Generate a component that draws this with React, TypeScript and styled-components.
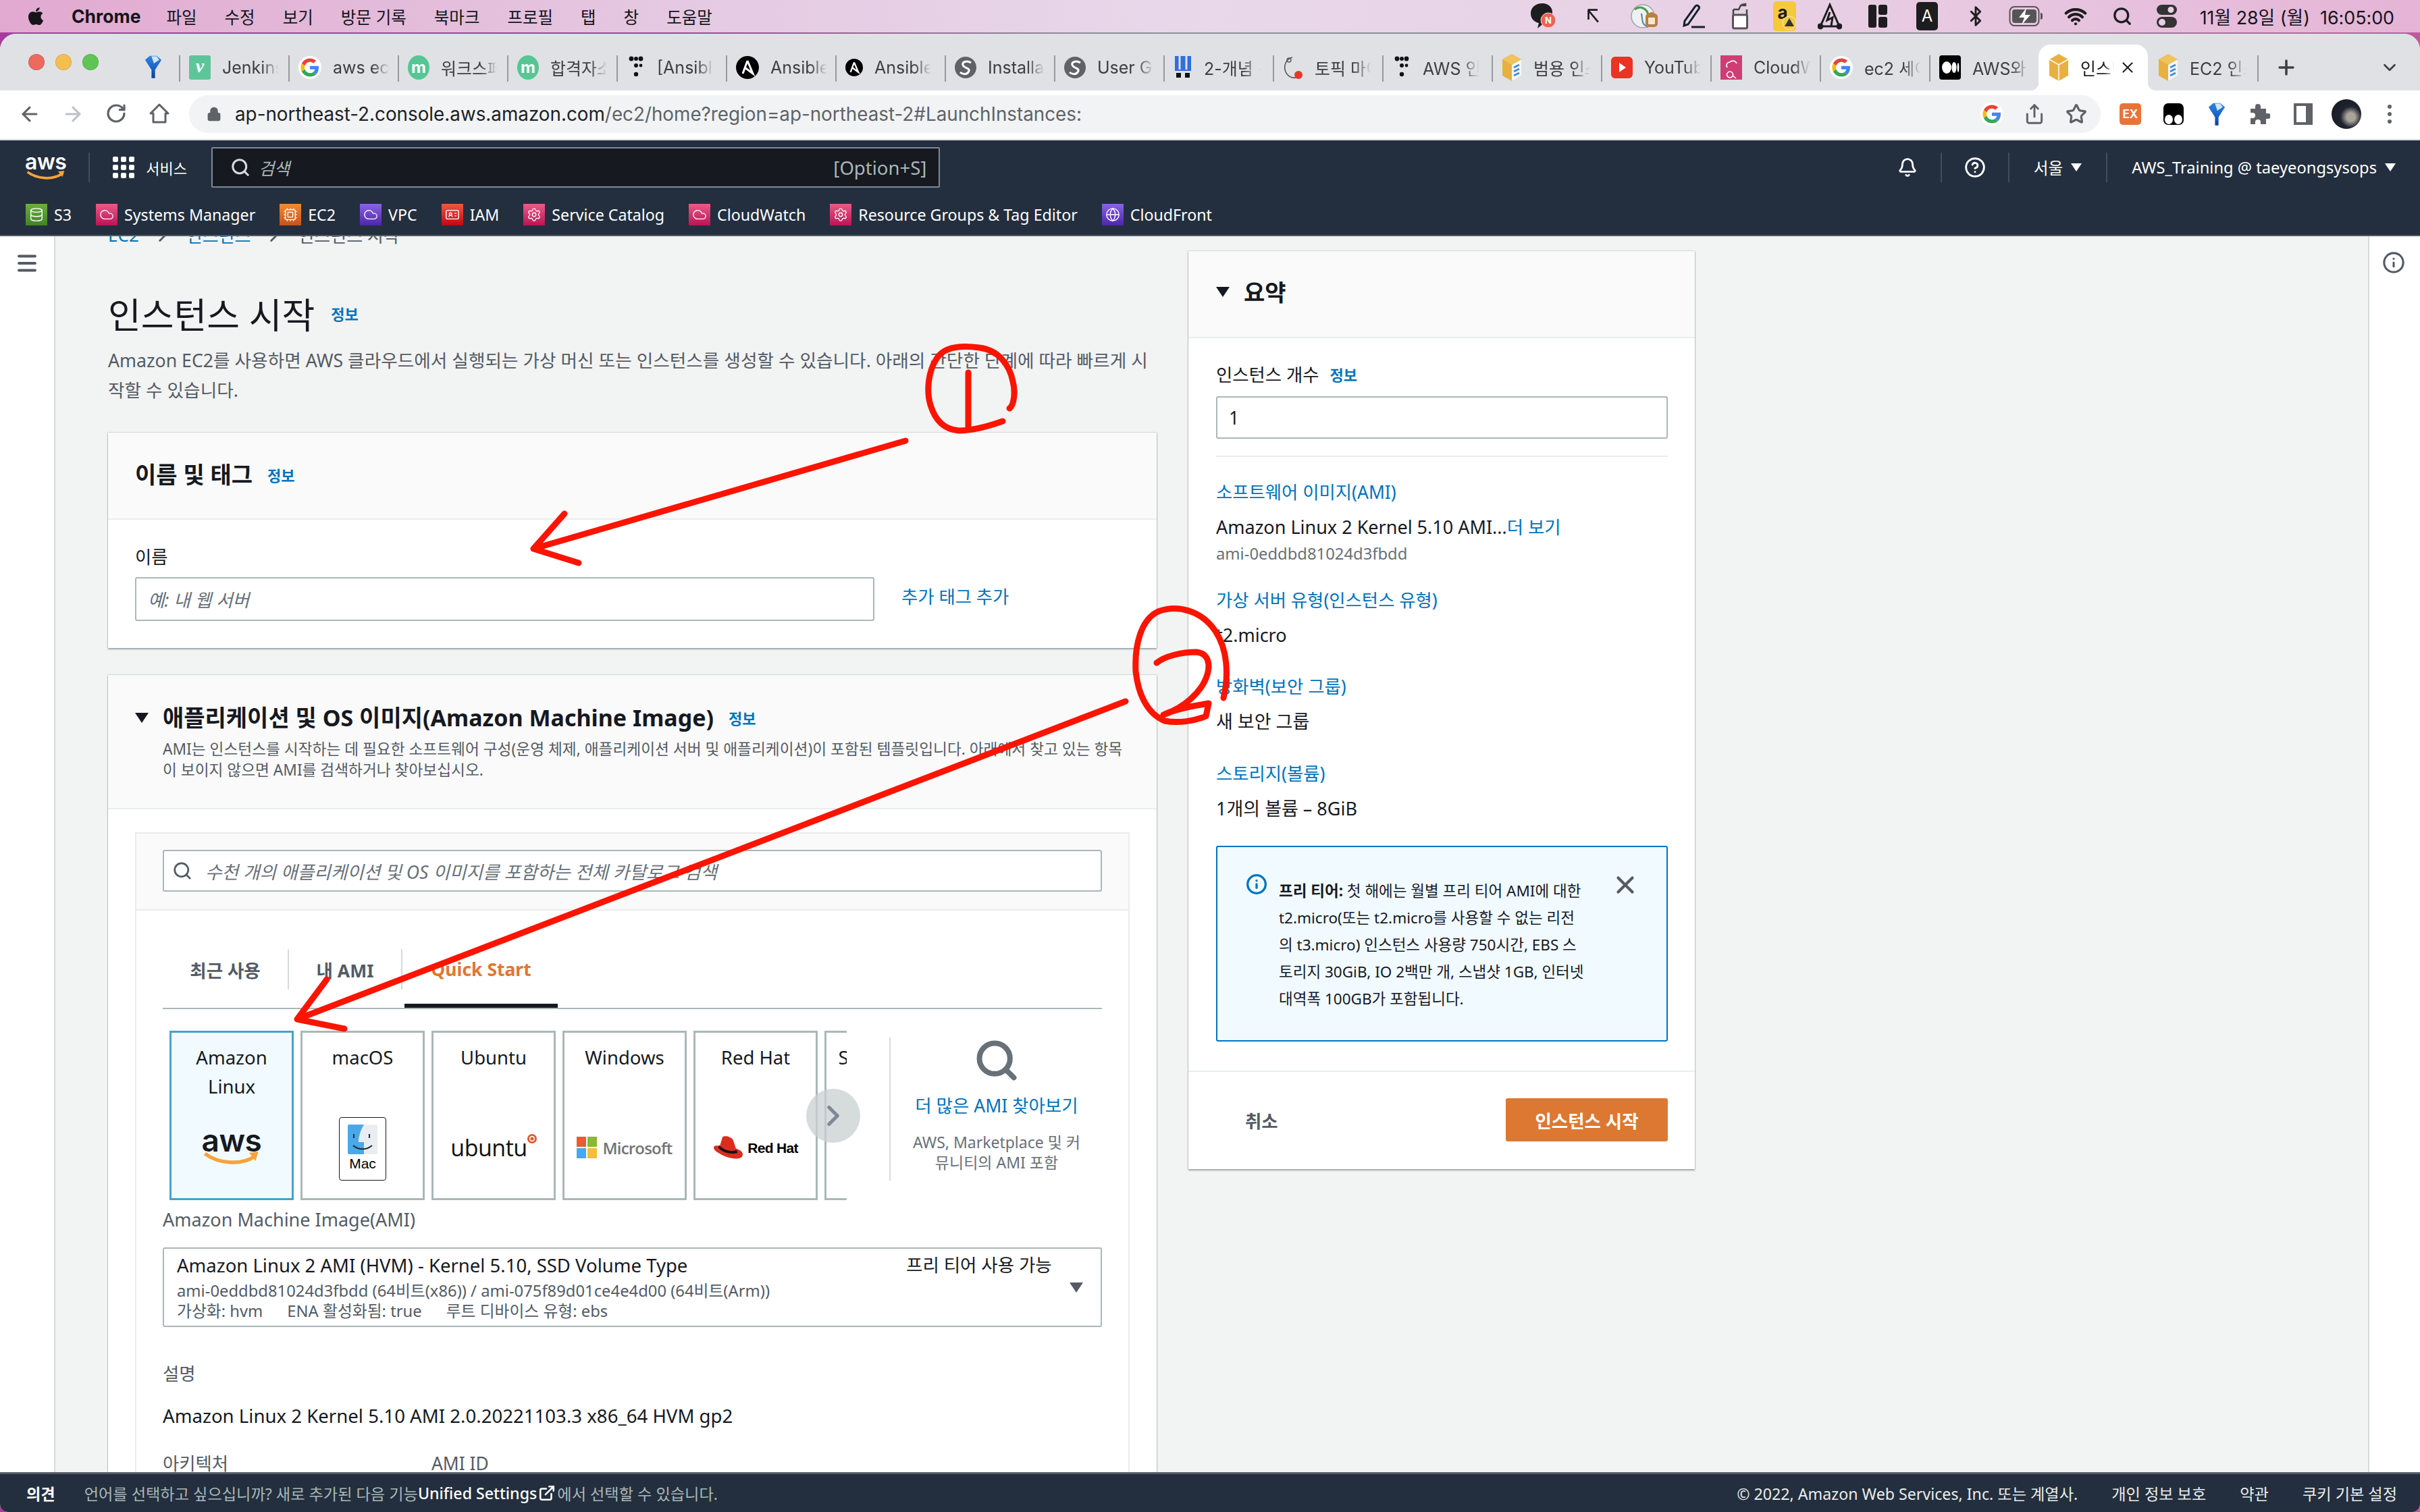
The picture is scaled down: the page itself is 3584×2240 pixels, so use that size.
import * as React from "react";
import styled, { createGlobalStyle } from "styled-components";
import {
  ArrowLeft,
  ArrowRight,
  Bell,
  Bluetooth,
  ChevronDown,
  ChevronRight,
  CircleHelp,
  Cloud,
  Cpu,
  Database,
  ExternalLink,
  Globe,
  IdCard,
  Info,
  Lock,
  Menu,
  Plus,
  RotateCw,
  Search,
  Settings,
  Share,
  Star,
  Wifi,
  X,
} from "lucide-react";
import { FaApple } from "react-icons/fa";

const UI_FONT = `Inter, "Noto Sans CJK KR", sans-serif`;
const AWS_FONT = `"Noto Sans", "Noto Sans CJK KR", sans-serif`;

const GlobalStyle = createGlobalStyle`
  html, body { margin: 0; padding: 0; background: #232f3e; }
  * { box-sizing: border-box; }
  #root { width: 3584px; height: 2240px; }
`;

const Screen = styled.div`
  position: relative;
  width: 3584px;
  height: 2240px;
  display: flex;
  flex-direction: column;
  overflow: hidden;
  font-family: ${AWS_FONT};
`;

const MenuBar = styled.div`
  height: 48px;
  flex-shrink: 0;
  display: flex;
  align-items: center;
  padding: 0 38px;
  color: #14141a;
  font-family: ${UI_FONT};
  font-size: 24.5px;
  background: linear-gradient(90deg, #e2a9d0 0%, #e5cbe3 30%, #e8d8ea 50%, #e8cfe4 75%, #e5b4d6 100%);
`;

const AppName = styled.span`
  font-weight: 700;
  font-size: 26.5px;
  margin: 0 38px 0 38px;
`;

const MenuItem = styled.span`
  margin-right: 41px;
`;

const StatusArea = styled.div`
  margin-left: auto;
  display: flex;
  align-items: center;
`;

const StatusCell = styled.div<{ $w: number }>`
  width: ${(p) => p.$w}px;
  height: 48px;
  display: flex;
  align-items: center;
  justify-content: center;
`;

const Clock = styled.span`
  margin-left: 16px;
  font-size: 26.8px;
  white-space: pre;
`;

const Desktop = styled.div`
  flex: 1;
  min-height: 0;
  display: flex;
  padding-top: 2px;
  background: linear-gradient(90deg, #a63b9c 0%, #a0468f 28%, #8f8d98 45%, #8f8d98 80%, #c05a9c 100%);
`;

const Window = styled.div`
  flex: 1;
  min-width: 0;
  display: flex;
  flex-direction: column;
  border-radius: 24px 24px 12px 12px;
  overflow: hidden;
  background: #f2f3f3;
`;

const TabStrip = styled.div`
  height: 84px;
  flex-shrink: 0;
  display: flex;
  background: #dfe1e5;
  font-family: ${UI_FONT};
`;

const Lights = styled.div`
  width: 265px;
  flex-shrink: 0;
  display: flex;
  align-items: center;
  gap: 16px;
  padding: 0 0 0 42px;
`;

const Light = styled.span<{ $c: string }>`
  width: 24px;
  height: 24px;
  border-radius: 50%;
  background: ${(p) => p.$c};
  border: 1px solid rgba(0, 0, 0, 0.1);
`;

const PinnedIcon = styled.span`
  display: flex;
  margin-left: 51px;
  margin-top: 14px;
`;

const Tab = styled.div<{ $active?: boolean; $noSep?: boolean }>`
  position: relative;
  width: 162px;
  flex-shrink: 0;
  display: flex;
  align-items: center;
  gap: 17px;
  padding: 16px 0 0 15px;
  color: #3c4043;
  font-size: 25px;

  &::before {
    content: "";
    display: ${(p) => (p.$noSep ? "none" : "block")};
    position: absolute;
    left: 0;
    top: 32px;
    width: 2px;
    height: 39px;
    background: #97999d;
  }

  ${(p) =>
    p.$active &&
    `
    margin-top: 16px;
    height: 68px;
    padding-top: 0;
    background: #fff;
    border-radius: 18px 18px 0 0;
    color: #202124;
    &::after {
      content: "";
      position: absolute;
      left: -12px;
      right: -12px;
      bottom: 0;
      height: 12px;
      z-index: 0;
      background:
        radial-gradient(circle at 0 0, #dfe1e5 12px, #fff 12.5px) left / 12px 12px no-repeat,
        radial-gradient(circle at 100% 0, #dfe1e5 12px, #fff 12.5px) right / 12px 12px no-repeat;
    }
  `}
`;

const TabTitle = styled.span<{ $w?: number }>`
  width: ${(p) => p.$w ?? 84}px;
  white-space: nowrap;
  overflow: hidden;
  mask-image: linear-gradient(90deg, #000 70%, transparent 100%);
`;

const TabClose = styled.span`
  display: flex;
  position: relative;
  z-index: 1;
  margin-left: -10px;
  color: #202124;
`;

const StripEnd = styled.div`
  flex: 1;
  position: relative;
  display: flex;
  align-items: center;
  padding: 16px 30px 0 26px;
  justify-content: space-between;
  color: #3c4043;

  &::before {
    content: "";
    position: absolute;
    left: 0;
    top: 32px;
    width: 2px;
    height: 39px;
    background: #97999d;
  }
`;

const Toolbar = styled.div`
  height: 74px;
  flex-shrink: 0;
  display: flex;
  align-items: center;
  padding: 0 0 2px 0;
  background: #fff;
  border-bottom: 2px solid #dadce0;
  font-family: ${UI_FONT};
`;

const NavButtons = styled.div`
  width: 280px;
  flex-shrink: 0;
  display: flex;
  padding-left: 12px;
`;

const ToolButton = styled.span<{ $dim?: boolean }>`
  width: 64px;
  display: flex;
  justify-content: center;
  color: ${(p) => (p.$dim ? "#bdc0c4" : "#5f6368")};
`;

const Omnibox = styled.div`
  width: 2831px;
  height: 56px;
  flex-shrink: 0;
  display: flex;
  align-items: center;
  border-radius: 28px;
  background: #f1f3f4;
  padding-left: 26px;
  color: #5f6368;
`;

const UrlText = styled.span`
  margin-left: 20px;
  font-size: 27.8px;
  white-space: nowrap;
  color: #5f6368;
`;

const UrlHost = styled.span`
  color: #202124;
`;

const OmniActions = styled.div`
  margin-left: auto;
  display: flex;
  align-items: center;
  gap: 30px;
  padding-right: 20px;
`;

const ExtensionArea = styled.div`
  flex: 1;
  display: flex;
  align-items: center;
  padding-left: 12px;
  color: #5f6368;
`;

const ExtCell = styled.span`
  width: 64px;
  display: flex;
  justify-content: center;
`;

const ExBadge = styled.span`
  width: 32px;
  height: 32px;
  border-radius: 5px;
  background: #e8743a;
  color: #fff;
  font-size: 17px;
  font-weight: 700;
  display: flex;
  align-items: center;
  justify-content: center;
`;

const Avatar = styled.span`
  width: 44px;
  height: 44px;
  border-radius: 50%;
  background: radial-gradient(circle at 65% 60%, #a9a49a 0 16%, #1f2430 40%, #14161c 100%);
`;

const AwsNav = styled.div`
  height: 142px;
  flex-shrink: 0;
  background: #232f3e;
  border-bottom: 2px solid #545b64;
  color: #fff;
`;

const NavTop = styled.div`
  height: 80px;
  display: flex;
  align-items: center;
  padding-left: 37px;
`;

const LogoGap = styled.span`
  width: 33px;
`;

const NavSep = styled.span`
  width: 2px;
  height: 44px;
  background: #414d5c;
`;

const ServicesButton = styled.div`
  display: flex;
  align-items: center;
  gap: 17px;
  width: 180px;
  padding-left: 34px;
  font-size: 22px;
`;

const GridIcon = styled.span`
  display: grid;
  grid-template-columns: repeat(3, 8px);
  grid-auto-rows: 8px;
  gap: 4px;

  i {
    border-radius: 2px;
    background: #fff;
  }
`;

const SearchBox = styled.div`
  width: 1079px;
  height: 60px;
  display: flex;
  align-items: center;
  padding: 0 18px 0 26px;
  background: #16191f;
  border: 2px solid #7d8998;
  border-radius: 2px;
`;

const SearchHint = styled.span`
  margin-left: 12px;
  font-size: 25px;
  font-style: italic;
  color: #aab7b8;
`;

const ShortCut = styled.span`
  margin-left: auto;
  font-size: 27.5px;
  color: #aab7b8;
`;

const NavRight = styled.div`
  margin-left: auto;
  display: flex;
  align-items: center;
  font-size: 23.7px;
  padding-right: 36px;
`;

const NavIcon = styled.span`
  width: 98px;
  display: flex;
  justify-content: center;
`;

const DownTriangle = styled.span<{ $color?: string; $w?: number }>`
  display: inline-block;
  margin-left: 12px;
  border-left: ${(p) => (p.$w ?? 16) / 2}px solid transparent;
  border-right: ${(p) => (p.$w ?? 16) / 2}px solid transparent;
  border-top: ${(p) => ((p.$w ?? 16) * 3) / 4}px solid ${(p) => p.$color ?? "#fff"};
`;

const RegionText = styled.span<{ $end?: boolean }>`
  display: flex;
  align-items: center;
  padding: 0 ${(p) => (p.$end ? 0 : 36)}px 0 36px;
  white-space: nowrap;
`;

const Favorites = styled.div`
  height: 60px;
  display: flex;
  align-items: center;
  padding-left: 38px;
  gap: 36px;
  font-size: 23.2px;
`;

const FavoriteItem = styled.span`
  display: flex;
  align-items: center;
  gap: 10px;
  white-space: nowrap;
`;

const ServiceTile = styled.span<{ $from: string; $to: string }>`
  width: 32px;
  height: 32px;
  display: flex;
  align-items: center;
  justify-content: center;
  color: #fff;
  background: linear-gradient(0deg, ${(p) => p.$from}, ${(p) => p.$to});
`;

const Main = styled.div`
  flex: 1;
  min-height: 0;
  display: flex;
  background: #f2f3f3;
`;

const Rail = styled.div<{ $side: "left" | "right" }>`
  width: ${(p) => (p.$side === "left" ? 82 : 77)}px;
  flex-shrink: 0;
  display: flex;
  justify-content: center;
  padding: 22px ${(p) => (p.$side === "left" ? 0 : 4)}px 0 0;
  background: #fff;
  color: #545b64;
  border-${(p) => (p.$side === "left" ? "right" : "left")}: 2px solid #d5dbdb;
`;

const Content = styled.div`
  flex: 1;
  min-width: 0;
  display: flex;
  align-items: flex-start;
  gap: 47px;
  padding-left: 78px;
  overflow: hidden;
`;

const FormColumn = styled.div`
  width: 1553px;
  flex-shrink: 0;
`;

const Crumbs = styled.div`
  height: 36px;
  margin-top: -20px;
  display: flex;
  align-items: center;
  gap: 18px;
  font-size: 26px;
  color: #545b64;

  a {
    color: #0073bb;
  }
`;

const TitleRow = styled.div`
  height: 70px;
  margin-top: 63px;
  display: flex;
  align-items: center;
  gap: 24px;
`;

const PageTitle = styled.h1`
  margin: 0;
  font-size: 53px;
  font-weight: 400;
  color: #16191f;
  white-space: nowrap;
`;

const InfoLink = styled.a`
  font-size: 22px;
  font-weight: 700;
  color: #0073bb;
  white-space: nowrap;
  align-self: center;
`;

const Intro = styled.p`
  margin: 13px 0 41px;
  font-size: 26.7px;
  line-height: 44px;
  color: #545b64;
  white-space: nowrap;
`;

const Panel = styled.section`
  background: #fff;
  box-shadow: 0 2px 2px rgba(0, 28, 36, 0.35), 1px 0 1px rgba(0, 28, 36, 0.1), -1px 0 1px rgba(0, 28, 36, 0.1), 0 -1px 1px rgba(0, 28, 36, 0.08);
  margin-bottom: 40px;
`;

const PanelHeader = styled.div<{ $h: number }>`
  height: ${(p) => p.$h}px;
  background: #fafafa;
  border-bottom: 2px solid #eaeded;
`;

const NameHeaderRow = styled.div`
  display: flex;
  align-items: center;
  gap: 22px;
  height: 123px;
  padding-left: 40px;
`;

const SectionTitle = styled.h2`
  margin: 0;
  font-size: 34px;
  line-height: 50px;
  font-weight: 700;
  color: #16191f;
  white-space: nowrap;
`;

const NameBody = styled.div`
  padding: 37px 40px 40px;
`;

const FieldLabel = styled.div`
  font-size: 26.4px;
  line-height: 36px;
  color: #16191f;
  margin-bottom: 12px;
`;

const NameRow = styled.div`
  display: flex;
  align-items: center;
  gap: 40px;
`;

const TextInput = styled.div<{ $w?: number; $h: number; $italic?: boolean }>`
  width: ${(p) => (p.$w ? `${p.$w}px` : "100%")};
  height: ${(p) => p.$h}px;
  display: flex;
  align-items: center;
  padding: 0 17px;
  background: #fff;
  border: 2px solid #aab7b8;
  border-radius: 3px;
  font-size: ${(p) => (p.$italic ? 26.7 : 26.4)}px;
  color: ${(p) => (p.$italic ? "#687078" : "#16191f")};
  font-style: ${(p) => (p.$italic ? "italic" : "normal")};
  white-space: nowrap;
`;

const LinkText = styled.a<{ $size?: number }>`
  font-size: ${(p) => p.$size ?? 26.4}px;
  color: #0073bb;
  white-space: nowrap;
`;

const AddTag = styled(LinkText)`
  margin-top: -10px;
`;

const AmiHeaderInner = styled.div`
  padding: 38px 40px 0;
`;

const AmiHeaderTitle = styled.div`
  display: flex;
  align-items: center;
  gap: 22px;
`;

const Caret = styled.span`
  width: 0;
  height: 0;
  margin-right: -1px;
  border-left: 10px solid transparent;
  border-right: 10px solid transparent;
  border-top: 15px solid #16191f;
`;

const AmiDesc = styled.p`
  margin: 6px 0 0 41px;
  font-size: 22.7px;
  line-height: 31px;
  color: #545b64;
  white-space: nowrap;
`;

const AmiBody = styled.div`
  padding: 34px 40px 0;
`;

const Catalog = styled.div`
  border: 2px solid #eaeded;
  border-bottom: 0;
  padding-bottom: 200px;
`;

const CatalogSearch = styled.div`
  padding: 24px 39px 26px;
  background: #fafafa;
  border-bottom: 2px solid #eaeded;
`;

const CatalogSearchIcon = styled(Search)`
  margin-left: -5px;
  flex-shrink: 0;
`;

const CatalogHint = styled.span`
  margin-left: 19px;
`;

const CatalogBody = styled.div`
  padding: 0 39px;
`;

const AmiTabs = styled.div`
  display: flex;
  height: 146px;
  padding-top: 57px;
  border-bottom: 2px solid #aab7b8;
`;

const AmiTab = styled.div<{ $w: number; $active?: boolean; $divider?: boolean }>`
  position: relative;
  width: ${(p) => p.$w}px;
  height: 60px;
  display: flex;
  align-items: center;
  justify-content: center;
  font-size: 26.5px;
  font-weight: 700;
  color: ${(p) => (p.$active ? "#dd7832" : "#545b64")};
  border-right: ${(p) => (p.$divider ? "2px solid #d5dbdb" : "0")};

  ${(p) =>
    p.$active &&
    `
    &::after {
      content: "";
      position: absolute;
      left: 3px;
      right: 3px;
      top: 81px;
      height: 6px;
      background: #16191f;
    }
  `}
`;

const CardsRow = styled.div`
  display: flex;
  margin-top: 32px;
  padding-left: 10px;
`;

const CardsViewport = styled.div`
  position: relative;
  width: 1066px;
  height: 251px;
  flex-shrink: 0;
`;

const CardsClip = styled.div`
  width: 1003px;
  height: 251px;
  overflow: hidden;
  display: flex;
  gap: 10px;
`;

const OsCard = styled.div<{ $active?: boolean }>`
  width: 184px;
  flex-shrink: 0;
  display: flex;
  flex-direction: column;
  align-items: center;
  padding: 15px 0;
  text-align: center;
  font-size: 27.5px;
  line-height: 43px;
  color: #16191f;
  white-space: nowrap;
  background: ${(p) => (p.$active ? "#f1faff" : "#fff")};
  border: 3px solid ${(p) => (p.$active ? "#44a3cb" : "#aab7b8")};
`;

const CardLogo = styled.div`
  margin-top: auto;
  height: 120px;
  display: flex;
  align-items: center;
  justify-content: center;
`;

const ScrollNext = styled.div`
  position: absolute;
  left: 943px;
  top: 86px;
  width: 80px;
  height: 80px;
  border-radius: 50%;
  display: flex;
  align-items: center;
  justify-content: center;
  color: #7d8998;
  background: rgba(200, 208, 208, 0.75);
`;

const MoreAmis = styled.div`
  width: 316px;
  flex-shrink: 0;
  margin-top: 10px;
  height: 212px;
  border-left: 2px solid #d5dbdb;
  display: flex;
  flex-direction: column;
  align-items: center;
  text-align: center;
  color: #687078;
  font-size: 23px;
  line-height: 30px;
`;

const MoreIcon = styled.div`
  display: flex;
  height: 86px;
  color: #687078;
`;

const MoreNote = styled.div`
  margin-top: 24px;
  white-space: nowrap;
`;

const AmiLabel = styled.div`
  margin-top: 11px;
  font-size: 27px;
  line-height: 36px;
  color: #545b64;
`;

const AmiSelect = styled.div`
  margin-top: 23px;
  height: 118px;
  padding: 8px 26px 0 19px;
  display: flex;
  justify-content: space-between;
  border: 2px solid #aab7b8;
  border-radius: 3px;
  white-space: nowrap;
`;

const AmiName = styled.div`
  font-size: 27.5px;
  line-height: 34px;
  color: #16191f;
  margin-bottom: 5px;
`;

const AmiMeta = styled.div`
  display: flex;
  gap: 36px;
  font-size: 23.8px;
  line-height: 30px;
  color: #545b64;
`;

const AmiTierColumn = styled.div`
  width: 262px;
  display: flex;
  flex-direction: column;
  align-items: flex-end;
  font-size: 26.5px;
  line-height: 32px;
  color: #16191f;
`;

const AmiTier = styled.span`
  align-self: flex-start;
`;

const SelectCaret = styled(DownTriangle)`
  margin: 10px 0 0;
`;

const DetailLabel = styled.div<{ $top: number }>`
  margin-top: ${(p) => p.$top}px;
  font-size: 26.4px;
  line-height: 36px;
  color: #545b64;
`;

const DetailValue = styled.div`
  margin-top: 26px;
  font-size: 27.6px;
  line-height: 36px;
  color: #16191f;
`;

const DetailGrid = styled.div`
  display: grid;
  grid-template-columns: 398px 1fr;
`;

const SummaryColumn = styled(Panel)`
  width: 750px;
  flex-shrink: 0;
  margin: 22px 0 0;
`;

const SummaryHeader = styled.div`
  height: 129px;
  display: flex;
  align-items: center;
  gap: 22px;
  padding: 0 0 6px 41px;
  background: #fafafa;
  border-bottom: 2px solid #eaeded;
`;

const SummaryBody = styled.div`
  padding: 36px 40px 43px 41px;
`;

const SummaryLabel = styled.div`
  display: flex;
  align-items: center;
  gap: 16px;
  font-size: 26.4px;
  line-height: 36px;
  color: #16191f;
  margin-bottom: 14px;
`;

const SummaryRule = styled.div`
  height: 2px;
  margin-top: 25px;
  background: #eaeded;
`;

const SummaryGroup = styled.div<{ $top: number }>`
  margin-top: ${(p) => p.$top}px;
`;

const SummaryLink = styled(LinkText)`
  display: block;
  line-height: 36px;
`;

const SummaryValue = styled.div`
  margin-top: 16px;
  font-size: 27px;
  line-height: 36px;
  color: #16191f;
  white-space: nowrap;
`;

const SummarySub = styled.div`
  margin-top: 6px;
  font-size: 23.8px;
  line-height: 30px;
  color: #687078;
`;

const FreeTier = styled.div`
  margin-top: 37px;
  height: 290px;
  display: flex;
  padding: 45px 40px 0 42px;
  background: #f1faff;
  border: 2px solid #0073bb;
  border-radius: 3px;
`;

const FreeTierIcon = styled.span`
  display: flex;
  height: 30px;
  margin: -6px 17px 0 0;
  color: #0073bb;
`;

const FreeTierText = styled.div`
  font-size: 22.5px;
  line-height: 40px;
  color: #16191f;
  white-space: nowrap;
`;

const FreeTierClose = styled.span`
  margin-left: auto;
  display: flex;
  margin-top: -10px;
  height: 42px;
  color: #545b64;
`;

const SummaryFooter = styled.div`
  height: 146px;
  display: flex;
  align-items: center;
  justify-content: space-between;
  padding: 0 40px 2px 84px;
  border-top: 2px solid #eaeded;
`;

const CancelText = styled.span`
  font-size: 26.4px;
  font-weight: 700;
  color: #545b64;
`;

const PrimaryButton = styled.button`
  width: 240px;
  height: 64px;
  border: 0;
  border-radius: 3px;
  background: #dd7832;
  color: #fff;
  font-family: inherit;
  font-size: 26.5px;
  font-weight: 700;
`;

const FooterBar = styled.footer`
  height: 59px;
  flex-shrink: 0;
  display: flex;
  align-items: center;
  padding: 0 34px 0 39px;
  background: #232f3e;
  border-top: 3px solid #545b64;
  font-size: 23.2px;
  color: #d5dbdb;
  white-space: nowrap;
`;

const Feedback = styled.span`
  font-weight: 700;
  color: #fff;
  margin-right: 43px;
`;

const FooterNotice = styled.span`
  display: flex;
  align-items: center;
  color: #aab7b8;

  b {
    font-weight: 500;
    color: #fff;
  }

  svg {
    color: #fff;
    margin: 0 2px;
  }
`;

const FooterLinks = styled.div`
  margin-left: auto;
  display: flex;
  gap: 50px;
  color: #eaeded;
`;

const Scribbles = styled.svg`
  position: absolute;
  left: 0;
  top: 0;
  pointer-events: none;
`;

const AwsWord = styled.span<{ $size: number; $color: string }>`
  display: block;
  font-family: Inter, sans-serif;
  font-weight: 600;
  font-size: ${(p) => p.$size}px;
  line-height: ${(p) => p.$size * 0.7}px;
  letter-spacing: -0.5px;
  color: ${(p) => p.$color};
  text-align: center;
`;

const AwsLogoBox = styled.span`
  display: flex;
  flex-direction: column;
  align-items: center;
`;

const MacBox = styled.div`
  width: 70px;
  height: 94px;
  margin-top: 4px;
  display: flex;
  flex-direction: column;
  align-items: center;
  padding-top: 10px;
  border: 1.5px solid #16191f;
  border-radius: 4px;
  background: #fff;
  font-family: "Liberation Sans", sans-serif;
  font-size: 21px;
  line-height: 28px;
  color: #000;
`;

const UbuntuMark = styled.span`
  display: flex;
  align-items: flex-start;
  font-family: "Open Sans", sans-serif;
  font-size: 34px;
  line-height: 40px;
  color: #111;
  letter-spacing: -0.5px;
`;

const MsMark = styled.span`
  display: flex;
  align-items: center;
  gap: 8px;
  font-family: "Open Sans", sans-serif;
  font-size: 24px;
  font-weight: 600;
  letter-spacing: -0.8px;
  color: #737373;
`;

const MsGrid = styled.span`
  display: grid;
  grid-template-columns: 14px 14px;
  grid-auto-rows: 15px;
  gap: 2px;
`;

const MsCell = styled.i<{ $c: string }>`
  background: ${(p) => p.$c};
`;

const RedHatMark = styled.span`
  display: flex;
  align-items: center;
  gap: 5px;
  font-family: "Liberation Sans", sans-serif;
  font-size: 21px;
  font-weight: 700;
  letter-spacing: -0.7px;
  color: #000;
`;

function GoogleG({ size = 30 }: { size?: number }) {
  return (
    <svg width={size} height={size} viewBox="-6 -6 60 60">
      <circle cx="24" cy="24" r="30" fill="#fff" />
      <path fill="#EA4335" d="M24 9.5c3.54 0 6.71 1.22 9.21 3.6l6.85-6.85C35.9 2.38 30.47 0 24 0 14.62 0 6.51 5.38 2.56 13.22l7.98 6.19C12.43 13.72 17.74 9.5 24 9.5z" />
      <path fill="#4285F4" d="M46.98 24.55c0-1.57-.15-3.09-.38-4.55H24v9.02h12.94c-.58 2.96-2.26 5.48-4.78 7.18l7.73 6c4.51-4.18 7.09-10.36 7.09-17.65z" />
      <path fill="#FBBC05" d="M10.53 28.59c-.48-1.45-.76-2.99-.76-4.59s.27-3.14.76-4.59l-7.98-6.19C.92 16.46 0 20.12 0 24c0 3.88.92 7.54 2.56 10.78l7.97-6.19z" />
      <path fill="#34A853" d="M24 48c6.48 0 11.93-2.13 15.89-5.81l-7.73-6c-2.15 1.45-4.92 2.3-8.16 2.3-6.26 0-11.57-4.22-13.47-9.91l-7.98 6.19C6.51 42.62 14.62 48 24 48z" />
    </svg>
  );
}

function FunnelIcon({ size = 32 }: { size?: number }) {
  return (
    <svg width={size} height={size * 1.3} viewBox="0 0 32 42">
      <defs>
        <linearGradient id="funnelFill" x1="0" y1="0" x2="0" y2="1">
          <stop offset="0" stopColor="#2f86e0" />
          <stop offset="0.6" stopColor="#1560c0" />
          <stop offset="1" stopColor="#0e3f90" />
        </linearGradient>
      </defs>
      <path d="M2 9 L10 2 H22 L30 9 L19 26 V40 H13 V26 Z" fill="url(#funnelFill)" />
      <path d="M13 3 H22 L26 9 L17 15 Z" fill="#fff" opacity="0.8" />
    </svg>
  );
}

function BoxIcon() {
  return (
    <svg width="30" height="42" viewBox="0 0 30 42">
      <path d="M15 1 L29 9 V33 L15 41 L1 33 V9 Z" fill="#e8b041" />
      <path d="M15 17 L29 9 V33 L15 41 Z" fill="#f5f7fb" />
      <path d="M18 21 l8 -4 M18 27 l8 -4 M18 33 l8 -4" stroke="#3f8fdc" strokeWidth="3" />
      <path d="M15 1 L29 9 L15 17 L1 9 Z" fill="#f0c35c" />
    </svg>
  );
}

function TabIcon({ kind }: { kind: string }) {
  switch (kind) {
    case "vagrant":
      return (
        <svg width="32" height="36" viewBox="0 0 32 36">
          <rect width="32" height="36" rx="3" fill="#5cc69a" />
          <text x="16" y="25" textAnchor="middle" fill="#fff" fontFamily="Liberation Serif" fontStyle="italic" fontWeight="700" fontSize="28">v</text>
        </svg>
      );
    case "google":
      return <GoogleG size={34} />;
    case "m":
      return (
        <svg width="32" height="36" viewBox="0 0 32 36">
          <ellipse cx="16" cy="18" rx="16" ry="18" fill="#55c694" />
          <text x="16" y="26" textAnchor="middle" fill="#fff" fontFamily="Inter" fontWeight="700" fontSize="24">m</text>
        </svg>
      );
    case "dots":
      return (
        <svg width="28" height="36" viewBox="0 0 28 36" fill="#111">
          <circle cx="7" cy="5" r="3.4" /><circle cx="14" cy="5" r="3" /><circle cx="21" cy="5" r="3.4" />
          <circle cx="14" cy="15" r="3" />
          <circle cx="21" cy="15" r="2.4" />
          <circle cx="14" cy="28" r="3.2" />
        </svg>
      );
    case "ansible":
    case "ansibleSmall": {
      const s = kind === "ansible" ? 34 : 26;
      return (
        <svg width={s} height={s} viewBox="0 0 34 34">
          <circle cx="17" cy="17" r="17" fill="#000" />
          <path d="M17 7 L25 26 L13 17 M17 7 L10 26" fill="none" stroke="#fff" strokeWidth="3" />
        </svg>
      );
    }
    case "swirl":
      return (
        <svg width="32" height="32" viewBox="0 0 32 32">
          <circle cx="16" cy="16" r="16" fill="#5f6368" />
          <path d="M24 9 C18 5 8 8 13 14 C17 18 24 17 20 23 C17 27 11 26 8 23" fill="none" stroke="#fff" strokeWidth="3" />
        </svg>
      );
    case "w":
      return (
        <svg width="28" height="34" viewBox="0 0 28 34">
          <path d="M2 0 H26 V22 H2 Z" fill="#2f6fe0" />
          <path d="M9 0 V20 M19 0 V20" stroke="#dfe1e5" strokeWidth="3" />
          <path d="M4 25 h7 v7 h-7 z M17 25 h7 v7 h-7 z" fill="#111" />
        </svg>
      );
    case "topic":
      return (
        <svg width="30" height="36" viewBox="0 0 30 36">
          <path d="M14 3 A14 15 0 1 0 20 33" fill="none" stroke="#555" strokeWidth="1.6" />
          <circle cx="9" cy="7" r="3" fill="none" stroke="#555" strokeWidth="1.4" />
          <circle cx="23" cy="29" r="6" fill="#e8362a" />
        </svg>
      );
    case "box":
      return <BoxIcon />;
    case "youtube":
      return (
        <svg width="32" height="32" viewBox="0 0 32 32">
          <rect width="32" height="32" rx="6" fill="#ea3323" />
          <path d="M12 9 L22 16 L12 23 Z" fill="#fff" />
        </svg>
      );
    case "cloudwatch":
      return (
        <svg width="32" height="36" viewBox="0 0 32 36">
          <rect width="32" height="36" fill="#cf3d74" />
          <path d="M10 18 a5 5 0 0 1 4 -8 a6 6 0 0 1 10 2 M14 24 a4.5 4.5 0 1 0 0.1 0 M18 30 l5 4" fill="none" stroke="#fff" strokeWidth="1.6" />
        </svg>
      );
    case "medium":
      return (
        <svg width="32" height="36" viewBox="0 0 32 36">
          <rect width="32" height="36" rx="4" fill="#000" />
          <ellipse cx="11" cy="18" rx="7" ry="9" fill="#fff" />
          <ellipse cx="22" cy="18" rx="3.5" ry="8" fill="#fff" />
          <ellipse cx="28" cy="18" rx="1.4" ry="7" fill="#fff" />
        </svg>
      );
    case "cube":
      return (
        <svg width="30" height="42" viewBox="0 0 30 42">
          <path d="M15 1 L29 9 V33 L15 41 L1 33 V9 Z" fill="#e8b041" />
          <path d="M1 9 L15 17 L29 9 M15 17 V41" fill="none" stroke="#fff" strokeWidth="1.5" />
        </svg>
      );
    default:
      return null;
  }
}

function AwsLogo({ size, color, smileWidth }: { size: number; color: string; smileWidth: number }) {
  return (
    <AwsLogoBox>
      <AwsWord $size={size} $color={color}>aws</AwsWord>
      <svg width={smileWidth} height={smileWidth * 0.26} viewBox="0 0 60 16" fill="none">
        <path d="M1 3 C16 14 40 16 55 6" stroke="#f7a33a" strokeWidth="4" />
        <path d="M49 2 L59 1 L56 11 Z" fill="#f7a33a" />
      </svg>
    </AwsLogoBox>
  );
}

function MacLogo() {
  return (
    <MacBox>
      <svg width="44" height="44" viewBox="0 0 44 44">
        <rect width="44" height="44" rx="2" fill="#e9edf2" />
        <path d="M0 2 a2 2 0 0 1 2 -2 H24 C18 10 16 20 16 26 H24 V44 H2 a2 2 0 0 1 -2 -2 Z" fill="#4aa8e8" />
        <path d="M9 14 v6 M32 14 v6" stroke="#1f2937" strokeWidth="2" />
        <path d="M8 31 C16 38 28 38 36 31" fill="none" stroke="#1f2937" strokeWidth="2" />
      </svg>
      <span>Mac</span>
    </MacBox>
  );
}

function UbuntuLogo() {
  return (
    <UbuntuMark>
      ubuntu
      <svg width="14" height="14" viewBox="0 0 14 14">
        <circle cx="7" cy="7" r="7" fill="#dd5c2f" />
        <circle cx="7" cy="7" r="3.4" fill="none" stroke="#fff" strokeWidth="1.6" />
      </svg>
    </UbuntuMark>
  );
}

function MicrosoftLogo() {
  return (
    <MsMark>
      <MsGrid>
        <MsCell $c="#e65c33" />
        <MsCell $c="#8ab833" />
        <MsCell $c="#49a7ee" />
        <MsCell $c="#f6bb40" />
      </MsGrid>
      Microsoft
    </MsMark>
  );
}

function RedHatLogo() {
  return (
    <RedHatMark>
      <svg width="46" height="35" viewBox="0 0 42 32">
        <path d="M13 1 C17 -1 24 1 27 5 L31 17 C37 19 41 22 40 26 C39 32 27 32 15 27 C6 23 0 19 1 15 C2 12 6 13 9 14 Z" fill="#db2c1e" />
        <path d="M8 12 C14 19 24 22 32 19 L33 23 C24 25 14 23 7 16 Z" fill="#111" />
      </svg>
      Red Hat
    </RedHatMark>
  );
}

function StatusIcon({ kind }: { kind: string }) {
  switch (kind) {
    case "chat":
      return (
        <svg width="38" height="40" viewBox="0 0 38 40">
          <path d="M17 1 C6 1 0 8 0 16 C0 24 6 29 12 30 L10 38 L20 30 C28 28 32 22 32 14 C32 7 26 1 17 1 Z" fill="#1d1d1f" />
          <circle cx="26" cy="26" r="11" fill="#ee6352" stroke="#e8d6e8" strokeWidth="1" />
          <text x="26" y="31" textAnchor="middle" fill="#fff" fontSize="13" fontWeight="700" fontFamily="Inter">N</text>
        </svg>
      );
    case "cursor":
      return (
        <svg width="24" height="26" viewBox="0 0 24 26" fill="none" stroke="#1d1d1f" strokeWidth="3">
          <path d="M5 20 V4 M4 4 H20 M5 5 L21 24" transform="scale(0.9)" />
        </svg>
      );
    case "globeLock":
      return (
        <svg width="42" height="40" viewBox="0 0 42 40">
          <circle cx="18" cy="20" r="17" fill="#eef0f1" stroke="#9aa7a5" strokeWidth="1.5" />
          <path d="M6 10 C14 4 24 8 26 18" fill="none" stroke="#4e9a4f" strokeWidth="3" />
          <path d="M16 16 C18 28 16 32 26 36" fill="none" stroke="#4c87a8" strokeWidth="2" />
          <rect x="22" y="16" width="18" height="20" rx="5" fill="#b97f3d" />
          <rect x="26" y="22" width="10" height="10" rx="1" fill="#f4e6d5" />
          <path d="M27 19 a4 4 0 0 1 8 0" fill="none" stroke="#b97f3d" strokeWidth="2" />
        </svg>
      );
    case "pen":
      return (
        <svg width="36" height="38" viewBox="0 0 36 38" fill="none" stroke="#16202f" strokeWidth="3">
          <path d="M3 33 L4 26 L20 4 C22 1 27 5 25 8 L9 31 Z" />
          <path d="M14 35 H34" />
        </svg>
      );
    case "printer":
      return (
        <svg width="24" height="40" viewBox="0 0 24 40">
          <path d="M2 10 H10 L13 4 H20 V2 L14 3 M2 10 V19 H22 V10" fill="none" stroke="#444" strokeWidth="2.5" />
          <rect x="1.5" y="18" width="21" height="20" rx="2" fill="#fff" stroke="#555" strokeWidth="3" />
        </svg>
      );
    case "amazon":
      return (
        <svg width="34" height="44" viewBox="0 0 34 44">
          <rect width="34" height="44" rx="5" fill="#f6c93c" />
          <text x="14" y="26" textAnchor="middle" fontSize="26" fontWeight="700" fontFamily="Inter" fill="#1d1d1f">a</text>
          <circle cx="24" cy="32" r="10" fill="#f6c93c" stroke="#f3ecd0" />
          <path d="M24 25 L31 37 H17 Z" fill="#333" />
        </svg>
      );
    case "tri":
      return (
        <svg width="36" height="40" viewBox="0 0 36 40" fill="none" stroke="#1d1d1f" strokeWidth="3">
          <path d="M18 3 L4 35 H32 Z M18 14 L14 26 L22 22 L20 34" />
          <circle cx="4" cy="35" r="3" fill="#1d1d1f" />
          <circle cx="32" cy="35" r="3" fill="#1d1d1f" />
        </svg>
      );
    case "blocks":
      return (
        <svg width="28" height="36" viewBox="0 0 28 36" fill="#1d1d1f">
          <rect x="0" y="1" width="12" height="34" rx="3" />
          <rect x="15" y="1" width="13" height="15" rx="3" />
          <rect x="15" y="19" width="13" height="16" rx="3" />
        </svg>
      );
    case "aBox":
      return (
        <svg width="32" height="42" viewBox="0 0 32 42">
          <rect width="32" height="42" rx="5" fill="#1d1d1f" />
          <text x="16" y="29" textAnchor="middle" fontSize="24" fill="#fff" fontFamily="Inter">A</text>
        </svg>
      );
    case "battery":
      return (
        <svg width="50" height="32" viewBox="0 0 50 32">
          <rect x="1.5" y="2" width="43" height="28" rx="7" fill="none" stroke="#555" strokeWidth="2" />
          <rect x="5" y="6" width="36" height="20" rx="4" fill="#555" />
          <path d="M47 11 a4 5 0 0 1 0 10" fill="#555" />
          <path d="M26 4 L15 18 H23 L19 29 L32 14 H24 Z" fill="#fff" />
        </svg>
      );
    case "toggles":
      return (
        <svg width="30" height="36" viewBox="0 0 30 36" fill="#333">
          <rect x="0" y="1" width="30" height="15" rx="7.5" />
          <rect x="0" y="19" width="30" height="16" rx="8" />
          <circle cx="21" cy="8.5" r="4.5" fill="#e8d0e4" />
          <circle cx="8" cy="27" r="5" fill="#e8d0e4" />
        </svg>
      );
    case "bluetooth":
      return <Bluetooth size={32} strokeWidth={2.2} color="#1d1d1f" />;
    case "wifi":
      return <Wifi size={34} strokeWidth={3} color="#1d1d1f" />;
    case "search":
      return <Search size={30} strokeWidth={2.6} color="#1d1d1f" />;
    default:
      return null;
  }
}

const statusIcons = [
  { kind: "chat", w: 72 },
  { kind: "cursor", w: 76 },
  { kind: "globeLock", w: 76 },
  { kind: "pen", w: 70 },
  { kind: "printer", w: 66 },
  { kind: "amazon", w: 66 },
  { kind: "tri", w: 68 },
  { kind: "blocks", w: 74 },
  { kind: "aBox", w: 72 },
  { kind: "bluetooth", w: 72 },
  { kind: "battery", w: 76 },
  { kind: "wifi", w: 72 },
  { kind: "search", w: 66 },
  { kind: "toggles", w: 66 },
];

const menuItems = ["파일", "수정", "보기", "방문 기록", "북마크", "프로필", "탭", "창", "도움말"];

const tabs = [
  { icon: "vagrant", title: "Jenkins" },
  { icon: "google", title: "aws ecs" },
  { icon: "m", title: "워크스페이스" },
  { icon: "m", title: "합격자소서" },
  { icon: "dots", title: "[Ansible" },
  { icon: "ansible", title: "Ansible" },
  { icon: "ansibleSmall", title: "Ansible" },
  { icon: "swirl", title: "Installa" },
  { icon: "swirl", title: "User Gu" },
  { icon: "w", title: "2-개념 -" },
  { icon: "topic", title: "토픽 마이" },
  { icon: "dots", title: "AWS 인" },
  { icon: "box", title: "범용 인스" },
  { icon: "youtube", title: "YouTub" },
  { icon: "cloudwatch", title: "CloudW" },
  { icon: "google", title: "ec2 세이" },
  { icon: "medium", title: "AWS와" },
];

const favorites = [
  { label: "S3", from: "#3f8624", to: "#6cae3e", icon: <Database size={22} strokeWidth={1.5} /> },
  { label: "Systems Manager", from: "#bc1356", to: "#ec5a87", icon: <Cloud size={22} strokeWidth={1.5} /> },
  { label: "EC2", from: "#c8511b", to: "#f08c32", icon: <Cpu size={22} strokeWidth={1.5} /> },
  { label: "VPC", from: "#4d27a8", to: "#8a63e6", icon: <Cloud size={22} strokeWidth={1.5} /> },
  { label: "IAM", from: "#bd0816", to: "#f0583e", icon: <IdCard size={22} strokeWidth={1.5} /> },
  { label: "Service Catalog", from: "#bc1356", to: "#ec5a87", icon: <Settings size={22} strokeWidth={1.5} /> },
  { label: "CloudWatch", from: "#bc1356", to: "#ec5a87", icon: <Cloud size={22} strokeWidth={1.5} /> },
  { label: "Resource Groups & Tag Editor", from: "#bc1356", to: "#ec5a87", icon: <Settings size={22} strokeWidth={1.5} /> },
  { label: "CloudFront", from: "#4d27a8", to: "#8a63e6", icon: <Globe size={22} strokeWidth={1.5} /> },
];

function Annotations() {
  return (
    <Scribbles width="3584" height="2240" viewBox="0 0 3584 2240" fill="none" stroke="#fb1400" strokeWidth="9" strokeLinecap="round" strokeLinejoin="round">
      {/* 1 */}
      <path d="M1495 605 C1502 600 1504 580 1500 565 C1495 540 1478 518 1450 515 C1428 512 1400 512 1388 530 C1374 550 1372 580 1378 600 C1384 620 1396 636 1420 638 C1442 638 1468 630 1485 624" />
      <path d="M1434 552 L1434 632" />
      <path d="M1341 653 L790 813 M836 761 L790 813 L857 834" />
      {/* 2 */}
      <path d="M1713 982 C1725 972 1750 966 1772 966 C1790 968 1794 985 1786 1005 C1778 1025 1755 1048 1723 1059 C1745 1048 1775 1045 1790 1042 L1786 1061 C1770 1068 1745 1072 1725 1068 C1700 1058 1686 1030 1682 995 C1680 955 1690 918 1715 906 C1745 895 1780 905 1800 935 C1818 962 1820 1000 1812 1034" />
      <path d="M1667 1039 L440 1510 M484 1451 L440 1510 L510 1524" />
    </Scribbles>
  );
}

export default function App() {
  return (
    <>
      <GlobalStyle />
      <Screen>
        <MenuBar>
          <FaApple size={30} />
          <AppName>Chrome</AppName>
          {menuItems.map((m) => (
            <MenuItem key={m}>{m}</MenuItem>
          ))}
          <StatusArea>
            {statusIcons.map((s) => (
              <StatusCell key={s.kind} $w={s.w}>
                <StatusIcon kind={s.kind} />
              </StatusCell>
            ))}
            <Clock>11월 28일 (월)  16:05:00</Clock>
          </StatusArea>
        </MenuBar>

        <Desktop>
          <Window>
            <TabStrip>
              <Lights>
                <Light $c="#ed6a5e" />
                <Light $c="#f4bf4f" />
                <Light $c="#61c554" />
                <PinnedIcon>
                  <FunnelIcon size={28} />
                </PinnedIcon>
              </Lights>
              {tabs.map((t, i) => (
                <Tab key={i}>
                  <TabIcon kind={t.icon} />
                  <TabTitle>{t.title}</TabTitle>
                </Tab>
              ))}
              <Tab $active $noSep>
                <TabIcon kind="cube" />
                <TabTitle $w={50}>인스턴스</TabTitle>
                <TabClose>
                  <X size={26} strokeWidth={2} />
                </TabClose>
              </Tab>
              <Tab $noSep>
                <TabIcon kind="box" />
                <TabTitle>EC2 인스</TabTitle>
              </Tab>
              <StripEnd>
                <Plus size={34} strokeWidth={2.5} />
                <ChevronDown size={30} strokeWidth={2.2} />
              </StripEnd>
            </TabStrip>

            <Toolbar>
              <NavButtons>
                <ToolButton>
                  <ArrowLeft size={34} strokeWidth={2.2} />
                </ToolButton>
                <ToolButton $dim>
                  <ArrowRight size={34} strokeWidth={2.2} />
                </ToolButton>
                <ToolButton>
                  <RotateCw size={32} strokeWidth={2.4} />
                </ToolButton>
                <ToolButton>
                  <svg width="32" height="32" viewBox="0 0 32 32" fill="none" stroke="currentColor" strokeWidth="3">
                    <path d="M16 3 L3 16 H7 V29 H25 V16 H29 Z" strokeLinejoin="round" />
                  </svg>
                </ToolButton>
              </NavButtons>
              <Omnibox>
                <Lock size={22} strokeWidth={2.5} fill="currentColor" />
                <UrlText>
                  <UrlHost>ap-northeast-2.console.aws.amazon.com</UrlHost>/ec2/home?region=ap-northeast-2#LaunchInstances:
                </UrlText>
                <OmniActions>
                  <GoogleG size={34} />
                  <Share size={32} strokeWidth={2.2} />
                  <Star size={32} strokeWidth={2.4} />
                </OmniActions>
              </Omnibox>
              <ExtensionArea>
                <ExtCell>
                  <ExBadge>EX</ExBadge>
                </ExtCell>
                <ExtCell>
                  <svg width="30" height="32" viewBox="0 0 30 32">
                    <rect width="30" height="32" rx="7" fill="#000" />
                    <ellipse cx="8" cy="24" rx="6" ry="7" fill="#fff" />
                    <ellipse cx="22" cy="24" rx="6" ry="7" fill="#fff" />
                  </svg>
                </ExtCell>
                <ExtCell>
                  <FunnelIcon size={28} />
                </ExtCell>
                <ExtCell>
                  <svg width="30" height="32" viewBox="0 0 30 32" fill="currentColor">
                    <path d="M12 1 a4 4 0 0 1 4 4 V8 H24 V15 H27 a4 4 0 0 1 0 8 H24 V31 H16 V28 a4 4 0 0 0 -8 0 V31 H1 V22 H4 a4 4 0 0 0 0 -8 H1 V8 H8 V5 a4 4 0 0 1 4 -4 Z" />
                  </svg>
                </ExtCell>
                <ExtCell>
                  <svg width="28" height="32" viewBox="0 0 28 32">
                    <rect width="28" height="32" fill="currentColor" />
                    <rect x="4" y="4" width="14" height="24" fill="#fff" />
                  </svg>
                </ExtCell>
                <ExtCell>
                  <Avatar />
                </ExtCell>
                <ExtCell>
                  <svg width="8" height="32" viewBox="0 0 8 32" fill="currentColor">
                    <circle cx="4" cy="5" r="3" />
                    <circle cx="4" cy="16" r="3" />
                    <circle cx="4" cy="27" r="3" />
                  </svg>
                </ExtCell>
              </ExtensionArea>
            </Toolbar>

            <AwsNav>
              <NavTop>
                <AwsLogo size={32} color="#fff" smileWidth={58} />
                <LogoGap />
                <NavSep />
                <ServicesButton>
                  <GridIcon>
                    {Array.from({ length: 9 }, (_, i) => (
                      <i key={i} />
                    ))}
                  </GridIcon>
                  서비스
                </ServicesButton>
                <SearchBox>
                  <Search size={30} strokeWidth={2.4} color="#d5dbdb" />
                  <SearchHint>검색</SearchHint>
                  <ShortCut>[Option+S]</ShortCut>
                </SearchBox>
                <NavRight>
                  <NavIcon>
                    <Bell size={30} strokeWidth={2.2} />
                  </NavIcon>
                  <NavSep />
                  <NavIcon>
                    <CircleHelp size={32} strokeWidth={2.2} />
                  </NavIcon>
                  <NavSep />
                  <RegionText>
                    서울
                    <DownTriangle />
                  </RegionText>
                  <NavSep />
                  <RegionText $end>
                    AWS_Training @ taeyeongsysops
                    <DownTriangle />
                  </RegionText>
                </NavRight>
              </NavTop>
              <Favorites>
                {favorites.map((f) => (
                  <FavoriteItem key={f.label}>
                    <ServiceTile $from={f.from} $to={f.to}>
                      {f.icon}
                    </ServiceTile>
                    {f.label}
                  </FavoriteItem>
                ))}
              </Favorites>
            </AwsNav>

            <Main>
              <Rail $side="left">
                <Menu size={36} strokeWidth={2.6} />
              </Rail>
              <Content>
                <FormColumn>
                  <Crumbs>
                    <a>EC2</a>
                    <ChevronRight size={34} />
                    <a>인스턴스</a>
                    <ChevronRight size={34} />
                    <span>인스턴스 시작</span>
                  </Crumbs>
                  <TitleRow>
                    <PageTitle>인스턴스 시작</PageTitle>
                    <InfoLink>정보</InfoLink>
                  </TitleRow>
                  <Intro>
                    Amazon EC2를 사용하면 AWS 클라우드에서 실행되는 가상 머신 또는 인스턴스를 생성할 수 있습니다. 아래의 간단한 단계에 따라 빠르게 시
                    <br />
                    작할 수 있습니다.
                  </Intro>

                  <Panel>
                    <PanelHeader $h={129}>
                      <NameHeaderRow>
                        <SectionTitle>이름 및 태그</SectionTitle>
                        <InfoLink>정보</InfoLink>
                      </NameHeaderRow>
                    </PanelHeader>
                    <NameBody>
                      <FieldLabel>이름</FieldLabel>
                      <NameRow>
                        <TextInput $w={1095} $h={65} $italic>
                          예: 내 웹 서버
                        </TextInput>
                        <AddTag>추가 태그 추가</AddTag>
                      </NameRow>
                    </NameBody>
                  </Panel>

                  <Panel>
                    <PanelHeader $h={199}>
                      <AmiHeaderInner>
                        <AmiHeaderTitle>
                          <Caret />
                          <SectionTitle>애플리케이션 및 OS 이미지(Amazon Machine Image)</SectionTitle>
                          <InfoLink>정보</InfoLink>
                        </AmiHeaderTitle>
                        <AmiDesc>
                          AMI는 인스턴스를 시작하는 데 필요한 소프트웨어 구성(운영 체제, 애플리케이션 서버 및 애플리케이션)이 포함된 템플릿입니다. 아래에서 찾고 있는 항목
                          <br />
                          이 보이지 않으면 AMI를 검색하거나 찾아보십시오.
                        </AmiDesc>
                      </AmiHeaderInner>
                    </PanelHeader>
                    <AmiBody>
                      <Catalog>
                        <CatalogSearch>
                          <TextInput $h={62} $italic>
                            <CatalogSearchIcon size={30} strokeWidth={2.2} color="#545b64" />
                            <CatalogHint>수천 개의 애플리케이션 및 OS 이미지를 포함하는 전체 카탈로그 검색</CatalogHint>
                          </TextInput>
                        </CatalogSearch>
                        <CatalogBody>
                          <AmiTabs>
                            <AmiTab $w={187} $divider>최근 사용</AmiTab>
                            <AmiTab $w={168} $divider>내 AMI</AmiTab>
                            <AmiTab $w={233} $active>Quick Start</AmiTab>
                          </AmiTabs>
                          <CardsRow>
                            <CardsViewport>
                              <CardsClip>
                                <OsCard $active>
                                  Amazon
                                  <br />
                                  Linux
                                  <CardLogo>
                                    <AwsLogo size={46} color="#16191f" smileWidth={84} />
                                  </CardLogo>
                                </OsCard>
                                <OsCard>
                                  macOS
                                  <CardLogo>
                                    <MacLogo />
                                  </CardLogo>
                                </OsCard>
                                <OsCard>
                                  Ubuntu
                                  <CardLogo>
                                    <UbuntuLogo />
                                  </CardLogo>
                                </OsCard>
                                <OsCard>
                                  Windows
                                  <CardLogo>
                                    <MicrosoftLogo />
                                  </CardLogo>
                                </OsCard>
                                <OsCard>
                                  Red Hat
                                  <CardLogo>
                                    <RedHatLogo />
                                  </CardLogo>
                                </OsCard>
                                <OsCard>SUSE Linux</OsCard>
                              </CardsClip>
                              <ScrollNext>
                                <ChevronRight size={50} strokeWidth={2.5} />
                              </ScrollNext>
                            </CardsViewport>
                            <MoreAmis>
                              <MoreIcon>
                                <Search size={68} strokeWidth={2.8} />
                              </MoreIcon>
                              <LinkText $size={26.5}>더 많은 AMI 찾아보기</LinkText>
                              <MoreNote>
                                AWS, Marketplace 및 커
                                <br />
                                뮤니티의 AMI 포함
                              </MoreNote>
                            </MoreAmis>
                          </CardsRow>
                          <AmiLabel>Amazon Machine Image(AMI)</AmiLabel>
                          <AmiSelect>
                            <div>
                              <AmiName>Amazon Linux 2 AMI (HVM) - Kernel 5.10, SSD Volume Type</AmiName>
                              <AmiMeta>ami-0eddbd81024d3fbdd (64비트(x86)) / ami-075f89d01ce4e4d00 (64비트(Arm))</AmiMeta>
                              <AmiMeta>
                                <span>가상화: hvm</span>
                                <span>ENA 활성화됨: true</span>
                                <span>루트 디바이스 유형: ebs</span>
                              </AmiMeta>
                            </div>
                            <AmiTierColumn>
                              <AmiTier>프리 티어 사용 가능</AmiTier>
                              <SelectCaret $color="#545b64" $w={20} />
                            </AmiTierColumn>
                          </AmiSelect>
                          <DetailLabel $top={51}>설명</DetailLabel>
                          <DetailValue>Amazon Linux 2 Kernel 5.10 AMI 2.0.20221103.3 x86_64 HVM gp2</DetailValue>
                          <DetailGrid>
                            <DetailLabel $top={35}>아키텍처</DetailLabel>
                            <DetailLabel $top={35}>AMI ID</DetailLabel>
                          </DetailGrid>
                        </CatalogBody>
                      </Catalog>
                    </AmiBody>
                  </Panel>
                </FormColumn>

                <SummaryColumn>
                  <SummaryHeader>
                    <Caret />
                    <SectionTitle>요약</SectionTitle>
                  </SummaryHeader>
                  <SummaryBody>
                    <SummaryLabel>
                      인스턴스 개수
                      <InfoLink>정보</InfoLink>
                    </SummaryLabel>
                    <TextInput $h={63}>1</TextInput>
                    <SummaryRule />
                    <SummaryGroup $top={34}>
                      <SummaryLink>소프트웨어 이미지(AMI)</SummaryLink>
                      <SummaryValue>
                        Amazon Linux 2 Kernel 5.10 AMI...<LinkText>더 보기</LinkText>
                      </SummaryValue>
                      <SummarySub>ami-0eddbd81024d3fbdd</SummarySub>
                    </SummaryGroup>
                    <SummaryGroup $top={36}>
                      <SummaryLink>가상 서버 유형(인스턴스 유형)</SummaryLink>
                      <SummaryValue>t2.micro</SummaryValue>
                    </SummaryGroup>
                    <SummaryGroup $top={40}>
                      <SummaryLink>방화벽(보안 그룹)</SummaryLink>
                      <SummaryValue>새 보안 그룹</SummaryValue>
                    </SummaryGroup>
                    <SummaryGroup $top={41}>
                      <SummaryLink>스토리지(볼륨)</SummaryLink>
                      <SummaryValue>1개의 볼륨 – 8GiB</SummaryValue>
                    </SummaryGroup>
                    <FreeTier>
                      <FreeTierIcon>
                        <Info size={32} strokeWidth={2.5} />
                      </FreeTierIcon>
                      <FreeTierText>
                        <b>프리 티어:</b> 첫 해에는 월별 프리 티어 AMI에 대한
                        <br />
                        t2.micro(또는 t2.micro를 사용할 수 없는 리전
                        <br />
                        의 t3.micro) 인스턴스 사용량 750시간, EBS 스
                        <br />
                        토리지 30GiB, IO 2백만 개, 스냅샷 1GB, 인터넷
                        <br />
                        대역폭 100GB가 포함됩니다.
                      </FreeTierText>
                      <FreeTierClose>
                        <X size={42} strokeWidth={2.4} />
                      </FreeTierClose>
                    </FreeTier>
                  </SummaryBody>
                  <SummaryFooter>
                    <CancelText>취소</CancelText>
                    <PrimaryButton>인스턴스 시작</PrimaryButton>
                  </SummaryFooter>
                </SummaryColumn>
              </Content>
              <Rail $side="right">
                <Info size={34} strokeWidth={2.2} />
              </Rail>
            </Main>

            <FooterBar>
              <Feedback>의견</Feedback>
              <FooterNotice>
                언어를 선택하고 싶으십니까? 새로 추가된 다음 기능<b>Unified Settings</b>
                <ExternalLink size={26} strokeWidth={2.4} />
                에서 선택할 수 있습니다.
              </FooterNotice>
              <FooterLinks>
                <span>© 2022, Amazon Web Services, Inc. 또는 계열사.</span>
                <span>개인 정보 보호</span>
                <span>약관</span>
                <span>쿠키 기본 설정</span>
              </FooterLinks>
            </FooterBar>
          </Window>
        </Desktop>
        <Annotations />
      </Screen>
    </>
  );
}
